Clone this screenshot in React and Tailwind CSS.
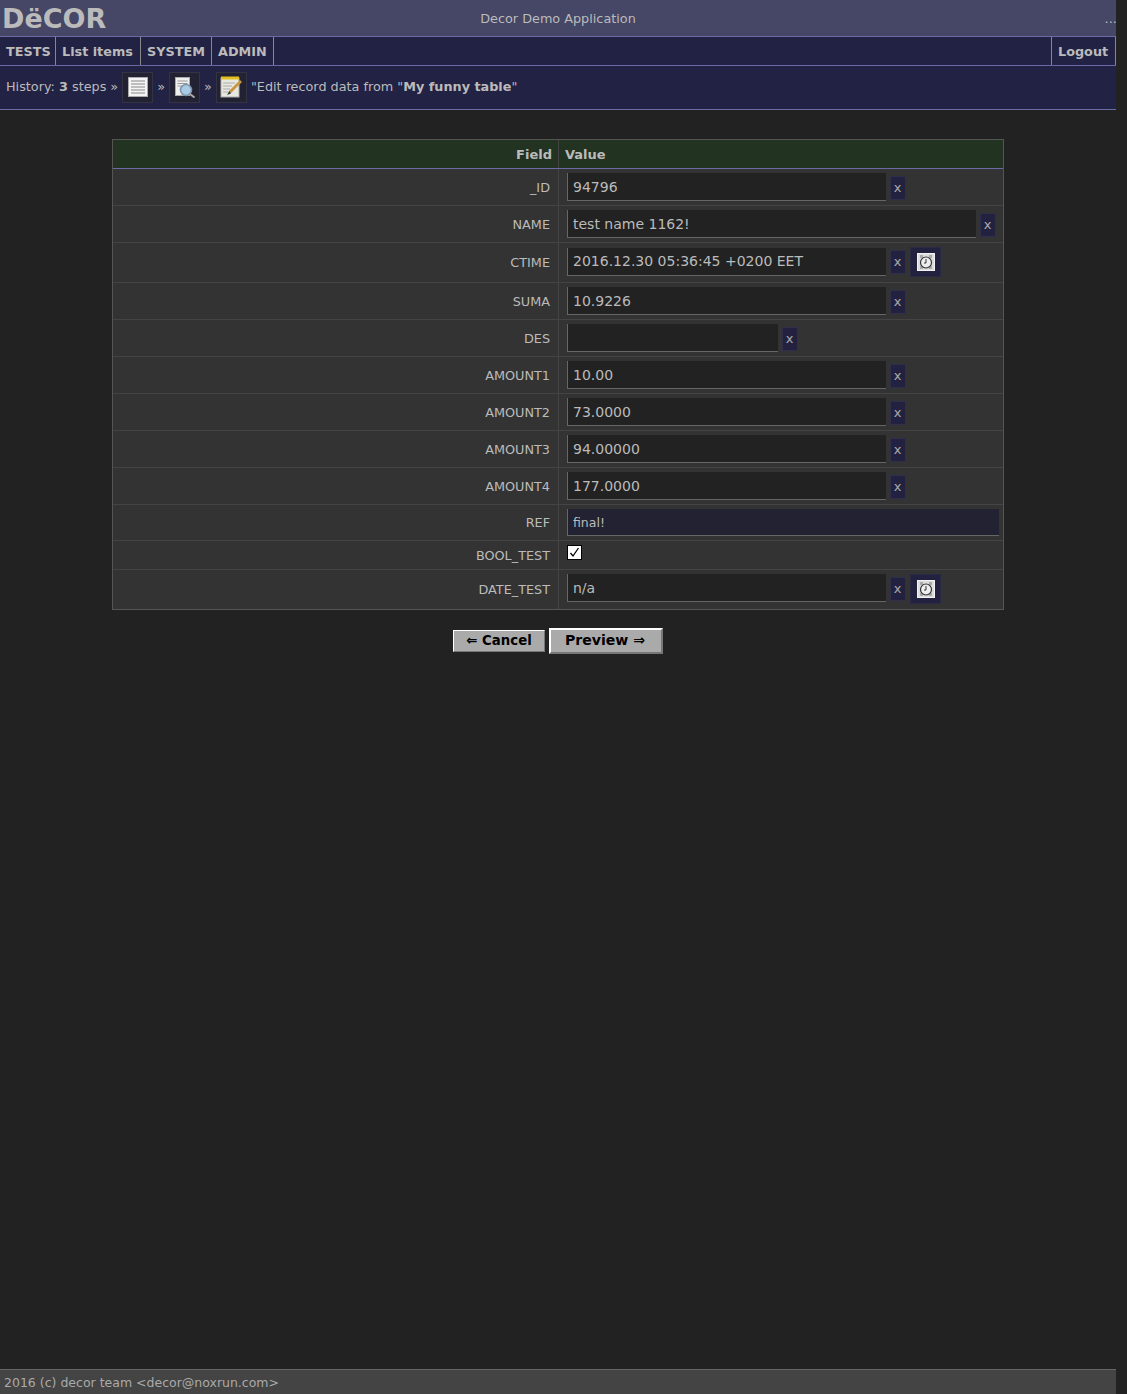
const rows = [
  { label: '_ID', value: '94796', h: 'h-[37px]', width: 'w-[319px]' },
  { label: 'NAME', value: 'test name 1162!', h: 'h-[37px]', width: 'w-[409px]' },
  { label: 'CTIME', value: '2016.12.30 05:36:45 +0200 EET', h: 'h-[40px]', width: 'w-[319px]', clock: true, inset: 'mt-[1px] h-[28px] pb-[2px]', labelClass: 'pt-[12px]' },
  { label: 'SUMA', value: '10.9226', h: 'h-[37px]', width: 'w-[319px]' },
  { label: 'DES', value: '', h: 'h-[37px]', width: 'w-[211px]' },
  { label: 'AMOUNT1', value: '10.00', h: 'h-[37px]', width: 'w-[319px]' },
  { label: 'AMOUNT2', value: '73.0000', h: 'h-[37px]', width: 'w-[319px]' },
  { label: 'AMOUNT3', value: '94.00000', h: 'h-[37px]', width: 'w-[319px]' },
  { label: 'AMOUNT4', value: '177.0000', h: 'h-[37px]', width: 'w-[319px]' },
]

const DocIcon = () => (
  <svg width="20" height="20" viewBox="0 0 20 20">
    <rect x="0.5" y="0.5" width="19" height="19" fill="#f4f4f4" stroke="#aaa" />
    <path d="M3 4h14M3 7h14M3 10h14M3 13h14M3 16h14" stroke="#888" strokeWidth="1" />
  </svg>
)

const SearchIcon = () => (
  <svg width="22" height="22" viewBox="0 0 22 22">
    <rect x="1.5" y="1.5" width="14" height="18" fill="#eee" stroke="#aaa" />
    <path d="M3.5 5h10M3.5 7.5h10M3.5 10h4" stroke="#999" strokeWidth="1" />
    <circle cx="12" cy="14" r="5.5" fill="#a9cbe8" stroke="#7d93a8" strokeWidth="1.5" />
    <path d="M16 18l4.5 3.5" stroke="#aaa" strokeWidth="2" />
  </svg>
)

const NoteIcon = () => (
  <svg width="22" height="22" viewBox="0 0 22 22">
    <rect x="1" y="2" width="18" height="19" fill="#e8e8e0" stroke="#aaa" />
    <rect x="1" y="0.5" width="18" height="3" fill="#e2c020" />
    <path d="M3 7h12M3 10h9M3 13h7M3 16h6" stroke="#aaa" strokeWidth="1" />
    <path d="M21 5L10 16" stroke="#c9963f" strokeWidth="3" />
    <path d="M9.5 15L7 19l4-1.5" fill="#333" />
  </svg>
)

const ClockIcon = () => (
  <svg width="18" height="18" viewBox="0 0 18 18">
    <rect width="18" height="18" fill="#ddd" />
    <rect x="0.5" y="0.5" width="17" height="17" fill="none" stroke="#f2f2f2" />
    <path d="M3 2h3v3H3zM12 2h3v3h-3zM3 13h3v3H3zM12 13h3v3h-3z" fill="#aaa" />
    <circle cx="9" cy="9.5" r="5.5" fill="#eee" stroke="#333" strokeWidth="1.2" />
    <path d="M9 6v4h-2" fill="none" stroke="#333" strokeWidth="1" />
  </svg>
)

const HistoryIcon = ({ children }) => (
  <span className="flex h-[31px] w-[31px] items-center justify-center border border-[#333344] bg-[#222233]">{children}</span>
)

const ClearButton = () => (
  <span className="ml-[4px] mt-[3px] flex h-[24px] w-[16px] items-center justify-center border border-[#2f2f4c] bg-[#222240] pb-[1px] pr-[1px] text-[13px] text-[#aaa]">x</span>
)

const ClockButton = () => (
  <span className="ml-[4px] flex h-[30px] w-[31px] items-center justify-center border border-[#2a2a44] bg-[#222240]"><ClockIcon /></span>
)

const Field = ({ value, width, tone = 'bg-[#222222]', className = 'h-[28px] pt-[1px]', textSize = 'text-[14px]' }) => (
  <input
    readOnly
    value={value}
    className={`${width} ${className} ${textSize} border-b border-l border-[#666666] ${tone} pl-[5px] pr-[4px] text-[#bbbbbb] outline-none`}
  />
)

const Row = ({ label, h, children, last, labelClass = 'pt-[11px]' }) => (
  <div className={`flex ${h} ${last ? '' : 'border-b border-[#444444]'}`}>
    <div className={`w-[446px] border-r border-[#444444] pr-[8px] text-right text-[12.8px] leading-[16px] text-[#bbbbbb] ${labelClass}`}>{label}</div>
    <div className="flex flex-1 items-start pl-[8px] pt-[4px]">{children}</div>
  </div>
)

export default function App() {
  return (
    <div className="flex min-h-[1394px] w-[1127px] flex-col bg-[#222222] font-['DejaVu_Sans',sans-serif] text-[#bbbbbb]">
      <div className="flex min-h-[1394px] w-[1116px] flex-col">
        <div className="relative flex h-[37px] items-center justify-between border-b border-[#6a6aa6] bg-[#464666] pl-[2px] pt-[2px]">
          <span className="text-[27px] leading-[34px] font-bold text-[#bbbbbb]">DëCOR</span>
          <span className="absolute left-0 right-0 text-center text-[12.8px] text-[#bbbbbb]">Decor Demo Application</span>
          <span className="-mr-[1px] text-[13px]">...</span>
        </div>

        <div className="flex h-[29px] items-stretch justify-between border-b border-[#6a6aa6] bg-[#222244] text-[12.8px] font-bold">
          <div className="flex">
            <span className="flex w-[56px] items-center border-r border-[#888888] pl-[6px] pt-[1px]">TESTS</span>
            <span className="flex w-[85px] items-center border-r border-[#888888] pl-[6px] pt-[1px]">List items</span>
            <span className="flex w-[71px] items-center border-r border-[#888888] pl-[6px] pt-[1px]">SYSTEM</span>
            <span className="flex w-[62px] items-center border-r border-[#888888] pl-[6px] pt-[1px]">ADMIN</span>
          </div>
          <span className="flex w-[65px] items-center border-x border-[#888888] pl-[6px] pt-[1px]">Logout</span>
        </div>

        <div className="flex h-[44px] items-center gap-[4px] border-b border-[#6a6aa6] bg-[#222244] pb-[1px] pl-[6px] text-[12.8px]">
          <span>History: <b>3</b> steps »</span>
          <HistoryIcon><DocIcon /></HistoryIcon>
          <span>»</span>
          <HistoryIcon><SearchIcon /></HistoryIcon>
          <span>»</span>
          <HistoryIcon><NoteIcon /></HistoryIcon>
          <span>"Edit record data from "<b>My funny table</b>"</span>
        </div>

        <div className="mx-auto mt-[29px] w-[892px] border border-[#555555] bg-[#333333]">
          <div className="flex h-[29px] border-b border-[#6a6aa6] bg-[#223322] text-[13px] font-bold leading-[29px]">
            <div className="w-[446px] border-r border-[#444444] pr-[6px] text-right">Field</div>
            <div className="pl-[6px]">Value</div>
          </div>

          {rows.map((row) => (
            <Row key={row.label} label={row.label} h={row.h} labelClass={row.labelClass}>
              <Field value={row.value} width={row.width} className={row.inset} />
              <ClearButton />
              {row.clock && <ClockButton />}
            </Row>
          ))}

          <Row label="REF" h="h-[36px]" labelClass="pt-[10px]">
            <Field value="final!" width="w-[432px]" tone="bg-[#222233]" className="h-[27px]" textSize="text-[12.5px]" />
          </Row>

          <Row label="BOOL_TEST" h="h-[29px]" labelClass="pt-[7px]">
            <span className="flex h-[15px] w-[15px] items-center justify-center border border-black bg-white">
              <svg width="13" height="13" viewBox="0 0 13 13"><path d="M2.5 7l2.5 3 5.5-8" fill="none" stroke="#000" strokeWidth="1.3" /></svg>
            </span>
          </Row>

          <Row label="DATE_TEST" h="h-[39px]" last labelClass="pt-[12px]">
            <Field value="n/a" width="w-[319px]" />
            <ClearButton />
            <ClockButton />
          </Row>
        </div>

        <div className="mt-[18px] flex items-center justify-center gap-[4px] font-bold text-black">
          <span className="flex h-[22px] w-[92px] items-center justify-center border border-t-white border-l-white border-r-[#777777] border-b-[#777777] bg-[#aaaaaa] pb-[1px] text-[13.3px]">⇐ Cancel</span>
          <span className="flex h-[26px] w-[114px] items-center justify-center border-2 border-t-white border-l-white border-r-[#777777] border-b-[#777777] bg-[#aaaaaa] pb-[1px] pr-[2px] text-[14.1px]">Preview ⇒</span>
        </div>

        <div className="mt-auto h-[25px] border-t border-[#666666] bg-[#444444] pl-[4px] text-[12.5px] leading-[25px] text-[#aaaaaa]">2016 (c) decor team &lt;decor@noxrun.com&gt;</div>
      </div>
    </div>
  )
}
